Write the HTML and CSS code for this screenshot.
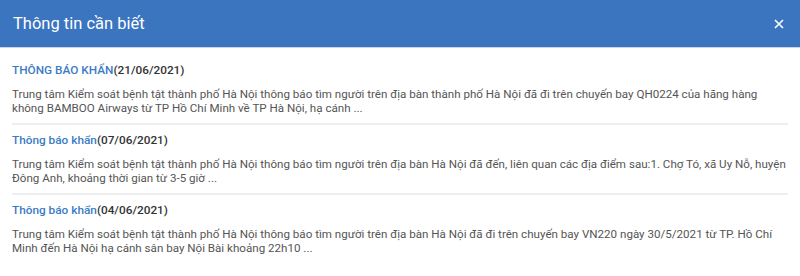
FILE: index.html
```html
<!DOCTYPE html>
<html lang="vi">
<head>
    <meta charset="UTF-8">
    <meta name="viewport" content="width=device-width, initial-scale=1.0">
    <title>Thông tin cần biết</title>
    <link rel="stylesheet" href="styles.css">
</head>
<body>
  <div class="dialog">
    <div class="dialog-head">
      <h2>Thông tin cần biết</h2>
      <button class="close" aria-label="Đóng">
        <svg width="10" height="10" viewBox="0 0 10 10"><path d="M1 1L9 9M9 1L1 9" stroke="#fff" stroke-width="1.6" fill="none"/></svg>
      </button>
    </div>
    <div class="news-list">
      <div class="news-item">
        <div class="news-title"><a href="#">THÔNG BÁO KHẨN</a>(21/06/2021)</div>
        <p class="news-text">Trung tâm Kiểm soát bệnh tật thành phố Hà Nội thông báo tìm người trên địa bàn thành phố Hà Nội đã đi trên chuyến bay QH0224 của hãng hàng không BAMBOO Airways từ TP Hồ Chí Minh về TP Hà Nội, hạ cánh ...</p>
      </div>
      <div class="news-item">
        <div class="news-title"><a href="#">Thông báo khẩn</a>(07/06/2021)</div>
        <p class="news-text">Trung tâm Kiểm soát bệnh tật thành phố Hà Nội thông báo tìm người trên địa bàn Hà Nội đã đến, liên quan các địa điểm sau:1. Chợ Tó, xã Uy Nỗ, huyện Đông Anh, khoảng thời gian từ 3-5 giờ ...</p>
      </div>
      <div class="news-item">
        <div class="news-title"><a href="#">Thông báo khẩn</a>(04/06/2021)</div>
        <p class="news-text">Trung tâm Kiểm soát bệnh tật thành phố Hà Nội thông báo tìm người trên địa bàn Hà Nội đã đi trên chuyến bay VN220 ngày 30/5/2021 từ TP. Hồ Chí Minh đến Hà Nội hạ cánh sân bay Nội Bài khoảng 22h10 ...</p>
      </div>
    </div>
  </div>
</body>
</html>
```

FILE: styles.css
```css
* {
  box-sizing: border-box;
}
body {
  margin: 0;
  background-color: #fff;
  font-family: Roboto, "Noto Sans", sans-serif;
}
.dialog-head {
  display: flex;
  align-items: center;
  justify-content: space-between;
  height: 48px;
  padding: 0 16px 0 13px;
  background-color: #3b74bf;
  border-bottom: 1px solid #c9d7ec;
}
.dialog-head h2 {
  margin: 0;
  color: #fff;
  font-size: 16.5px;
  font-weight: 400;
}
.close {
  display: flex;
  padding: 0;
  border: none;
  background: none;
}
.news-list {
  padding: 7px 12px 0 12px;
}
.news-item {
  padding: 6px 0 8px 0;
  border-bottom: 2px solid #eeeeee;
}
.news-item:last-child {
  border-bottom: none;
}
.news-title {
  font-size: 11.8px;
  font-weight: 500;
  line-height: 18px;
  color: #333;
}
.news-title a {
  color: #3b7bc6;
  text-decoration: none;
}
.news-text {
  margin: 8px 0 0 0;
  font-size: 11.6px;
  line-height: 14px;
  color: #555;
}
```
